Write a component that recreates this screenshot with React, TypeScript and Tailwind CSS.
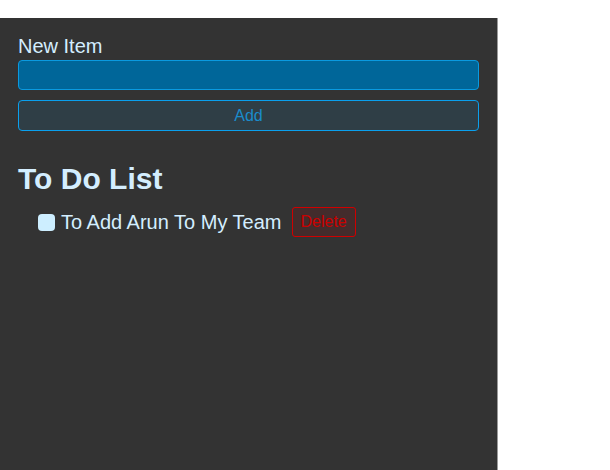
import React from "react";

export default function App() {
  return (
    <div className="w-[610px] h-[470px] bg-white pt-[18px]" style={{ fontFamily: '"Liberation Sans", Arial, sans-serif' }}>
      <div className="w-[498px] h-[452px] bg-[#333333] border-r border-[#9a9a9a] px-[18px] pt-[17px]">
        <label className="block text-[20px] leading-[23px] text-[#d4eeff]">New Item</label>
        <div className="mt-[2px] h-[30px] rounded-[4px] border border-[#0a9ae0] bg-[#006699]" />
        <button className="block mt-[10px] w-full h-[31px] rounded-[4px] border border-[#0aa0ee] bg-[#2f3e46] text-[16px] leading-[28px] text-[#1a8ccc]">
          Add
        </button>
        <h1 className="mt-[31px] text-[30px] font-bold leading-[34px] text-[#d4eeff]">To Do List</h1>
        <ul className="mt-[11px] pl-[20px]">
          <li className="flex items-center h-[30px]">
            <span className="w-[17px] h-[17px] rounded-[4px] bg-[#cdeeff]" />
            <span className="ml-[6px] text-[20px] text-[#d4eeff]">To Add Arun To My Team</span>
            <button className="ml-[10px] h-[30px] px-[8px] rounded-[3px] border border-solid border-[#d00000] bg-[#432c2c] text-[16px] text-[#cc0000]">
              Delete
            </button>
          </li>
        </ul>
      </div>
    </div>
  );
}
